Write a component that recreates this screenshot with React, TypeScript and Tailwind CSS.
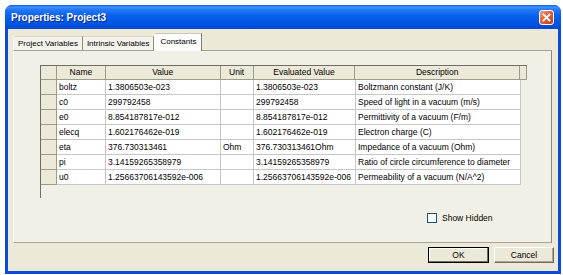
import React from "react";

const rows = [
  { name: "boltz", value: "1.3806503e-023", unit: "", evaluated: "1.3806503e-023", desc: "Boltzmann constant (J/K)" },
  { name: "c0", value: "299792458", unit: "", evaluated: "299792458", desc: "Speed of light in a vacuum (m/s)" },
  { name: "e0", value: "8.854187817e-012", unit: "", evaluated: "8.854187817e-012", desc: "Permittivity of a vacuum (F/m)" },
  { name: "elecq", value: "1.602176462e-019", unit: "", evaluated: "1.602176462e-019", desc: "Electron charge (C)" },
  { name: "eta", value: "376.730313461", unit: "Ohm", evaluated: "376.730313461Ohm", desc: "Impedance of a vacuum (Ohm)" },
  { name: "pi", value: "3.14159265358979", unit: "", evaluated: "3.14159265358979", desc: "Ratio of circle circumference to diameter" },
  { name: "u0", value: "1.25663706143592e-006", unit: "", evaluated: "1.25663706143592e-006", desc: "Permeability of a vacuum (N/A^2)" },
];

const cols = [
  { key: "name", label: "Name", w: "w-[49px]" },
  { key: "value", label: "Value", w: "w-[115px]" },
  { key: "unit", label: "Unit", w: "w-[33px]" },
  { key: "evaluated", label: "Evaluated Value", w: "w-[102px]" },
  { key: "desc", label: "Description", w: "w-[165px]" },
] as const;

const Tab = ({ label, active }: { label: string; active?: boolean }) =>
  active ? (
    <div className="relative z-10 -mb-px h-[18px] px-[5px] pt-[2px] bg-[#FCFCFA] border-t border-l border-r border-t-[#C9C7BA] border-l-[#FFFFFF] border-r-[#7F7D72] text-black">
      {label}
    </div>
  ) : (
    <div className="h-[14px] px-[4px] leading-[13px] border-t border-r border-t-[#D6D3C6] border-r-[#8F8C80] bg-[#F3F2EB]">
      {label}
    </div>
  );

export default function App() {
  return (
    <div className="w-[563px] h-[275px] bg-white pl-[5px] pt-[5px]" style={{ fontFamily: '"Liberation Sans", Arial, sans-serif' }}>
      <div className="w-[556px] h-[269px] flex flex-col rounded-t-[7px] overflow-hidden bg-[#0A4BD8]">
        {/* title bar */}
        <div className="h-[24px] shrink-0 flex items-center justify-between pl-[6px] pr-[7px] bg-[linear-gradient(180deg,#0B5EE6_0%,#3D92FF_9%,#2779F8_18%,#0860EB_45%,#0056E4_75%,#0048D2_100%)]">
          <span className="text-white font-bold text-[10px] [text-shadow:1px_1px_0_#0A2A8A]">Properties: Project3</span>
          <div className="w-[15px] h-[15px] rounded-[3px] border border-white bg-[linear-gradient(135deg,#F0A080_0%,#E0603A_45%,#C7401A_100%)] flex items-center justify-center">
            <svg width="9" height="9" viewBox="0 0 9 9">
              <path d="M1.5 1.5 L7.5 7.5 M7.5 1.5 L1.5 7.5" stroke="white" strokeWidth="1.8" strokeLinecap="square" />
            </svg>
          </div>
        </div>

        {/* client */}
        <div className="flex-1 mx-[3px] mb-[3px] bg-[#ECE9D8] flex flex-col text-[8.5px] text-black">
          {/* tabs */}
          <div className="h-[21px] pl-[5px] flex items-end text-[8px]">
            <div className="border-l border-l-[#FFFFFF] flex items-end">
              <Tab label="Project Variables" />
            </div>
            <Tab label="Intrinsic Variables" />
            <Tab label="Constants" active />
          </div>

          {/* panel */}
          <div className="ml-[5px] mr-[6px] h-[193px] border border-t-[#A6A498] border-l-[#FFFFFF] border-r-[#8A877C] border-b-[#A7A598] bg-[#F2F0E6] pl-[26px] pt-[14px]">
            {/* grid */}
            <div className="h-[133px] w-[487px] border-l border-l-[#6F6D64]">
              {/* header */}
              <div className="flex h-[15px] border-t border-t-[#6F6D64] bg-[#ECE9D8]">
                <div className="w-[16px] border-r border-b border-r-[#9D9A8E] border-b-[#9D9A8E]" />
                {cols.map((c) => (
                  <div key={c.key} className={`${c.w} flex items-center justify-center border-r border-b border-r-[#9D9A8E] border-b-[#9D9A8E]`}>
                    {c.label}
                  </div>
                ))}
                <div className="w-[7px] border-r border-b border-r-[#9D9A8E] border-b-[#9D9A8E]" />
              </div>
              {rows.map((r) => (
                <div key={r.name} className="flex h-[15px]">
                  <div className="w-[16px] bg-[#ECE9D8] border-r border-b border-r-[#9D9A8E] border-b-[#9D9A8E]" />
                  {cols.map((c) => (
                    <div key={c.key} className={`${c.w} bg-white pl-[2px] flex items-center whitespace-nowrap overflow-hidden border-r border-b border-r-[#C7C7C7] border-b-[#C7C7C7]`}>
                      {r[c.key]}
                    </div>
                  ))}
                </div>
              ))}
            </div>

            {/* show hidden */}
            <div className="mt-[14px] pl-[387px] flex items-center gap-[5px]">
              <div className="w-[10px] h-[10px] bg-white border border-[#1C5180]" />
              <span>Show Hidden</span>
            </div>
          </div>

          {/* buttons */}
          <div className="flex justify-end gap-[5px] pr-[4px] pt-[4px]">
            <button className="w-[61px] h-[16px] border border-black bg-[#ECE9D8] shadow-[inset_-1px_-1px_0_#716F64,inset_1px_1px_0_#FFFFFF] flex items-center justify-center">
              OK
            </button>
            <button className="w-[60px] h-[16px] border border-t-[#FFFFFF] border-l-[#FFFFFF] border-r-[#716F64] border-b-[#716F64] bg-[#ECE9D8] shadow-[inset_-1px_-1px_0_#ACA899] flex items-center justify-center">
              Cancel
            </button>
          </div>
        </div>
      </div>
    </div>
  );
}
